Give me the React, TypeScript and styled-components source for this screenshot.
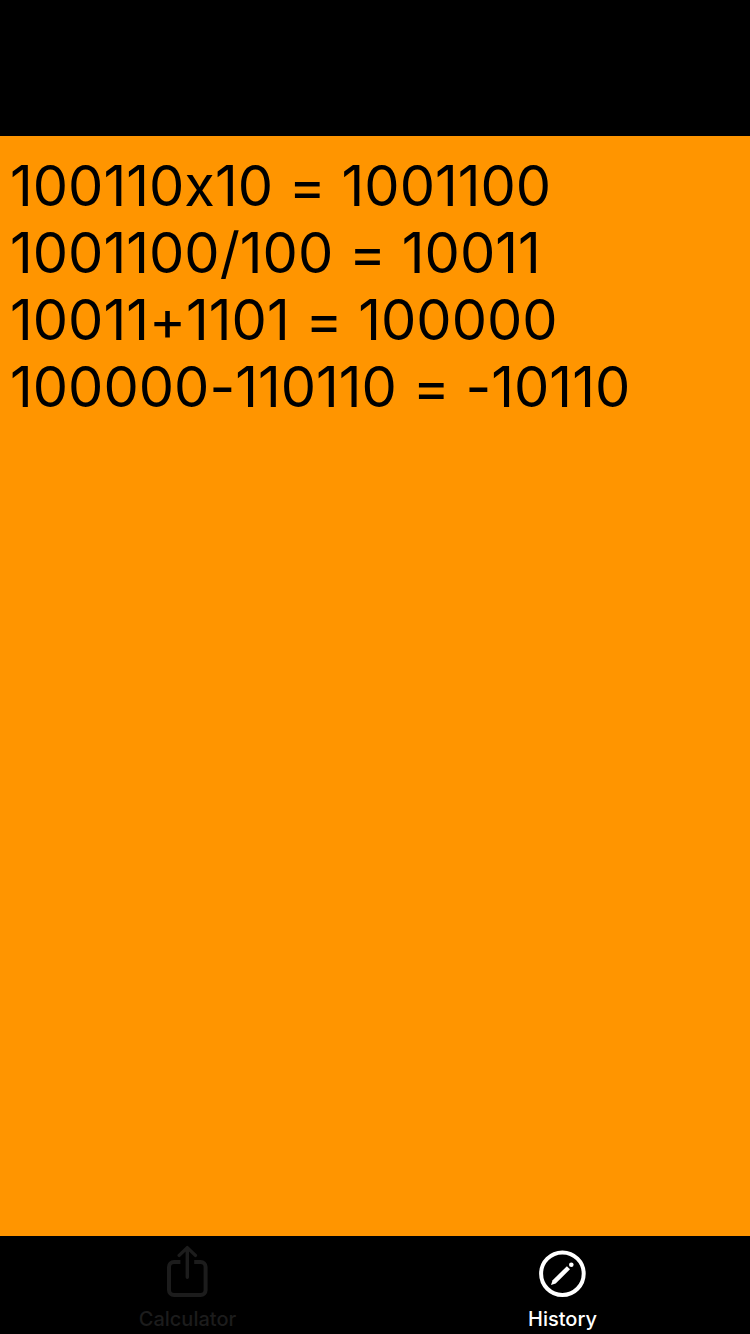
import React from 'react';
import styled, { createGlobalStyle } from 'styled-components';

const GlobalStyle = createGlobalStyle`
  *, *::before, *::after { box-sizing: border-box; }
  body { margin: 0; background: #000; font-family: Inter, "Liberation Sans", sans-serif; }
`;

const Screen = styled.div`
  display: flex;
  flex-direction: column;
  min-height: 100vh;
`;

const Header = styled.header`
  height: 136px;
  background: #000;
`;

const HistoryList = styled.ul`
  flex: 1;
  margin: 0;
  padding: 17px 10px;
  list-style: none;
  background: #ff9500;
  color: #000;
`;

const Entry = styled.li`
  font-size: 56px;
  line-height: 67px;
  font-feature-settings: "calt" 0;
`;

const TabBar = styled.nav`
  display: flex;
  height: 98px;
  background: #000;
`;

const Tab = styled.button<{ $active?: boolean }>`
  flex: 1;
  display: flex;
  flex-direction: column;
  align-items: center;
  justify-content: flex-end;
  gap: 8px;
  padding: 0 0 3px;
  border: 0;
  background: none;
  color: ${(p) => (p.$active ? '#fff' : '#1c1c1c')};
  font-family: inherit;
  font-size: 20px;
  font-weight: 500;
  line-height: 24px;
`;

const ShareIcon = () => (
  <svg width="41" height="54" viewBox="0 0 41 54" fill="none" stroke="currentColor" strokeWidth="4" aria-hidden="true">
    <path d="M13.4 17H7a5 5 0 0 0-5 5v23a5 5 0 0 0 5 5h26.6a5 5 0 0 0 5-5V22a5 5 0 0 0-5-5h-6.4" />
    <path d="M20.3 32.2V2.6M12.2 10.4l8.1-7.8 8.1 7.8" strokeLinecap="round" strokeLinejoin="round" strokeWidth="3.4" />
  </svg>
);

const PencilIcon = () => (
  <svg width="47" height="54" viewBox="0 0 47 54" fill="currentColor" aria-hidden="true">
    <circle cx="23.4" cy="28.7" r="21.3" fill="none" stroke="currentColor" strokeWidth="4" />
    <path d="M12 40l1.6-4.8L27.9 21.2l3.1 3.1-14.3 14.1z" />
    <circle cx="32.3" cy="19.8" r="2.3" />
  </svg>
);

const entries = [
  '100110x10 = 1001100',
  '1001100/100 = 10011',
  '10011+1101 = 100000',
  '100000-110110 = -10110',
];

export default function App() {
  return (
    <>
      <GlobalStyle />
      <Screen>
        <Header />
        <HistoryList>
          {entries.map((e) => (
            <Entry key={e}>{e}</Entry>
          ))}
        </HistoryList>
        <TabBar>
          <Tab>
            <ShareIcon />
            Calculator
          </Tab>
          <Tab $active aria-current="page">
            <PencilIcon />
            History
          </Tab>
        </TabBar>
      </Screen>
    </>
  );
}
